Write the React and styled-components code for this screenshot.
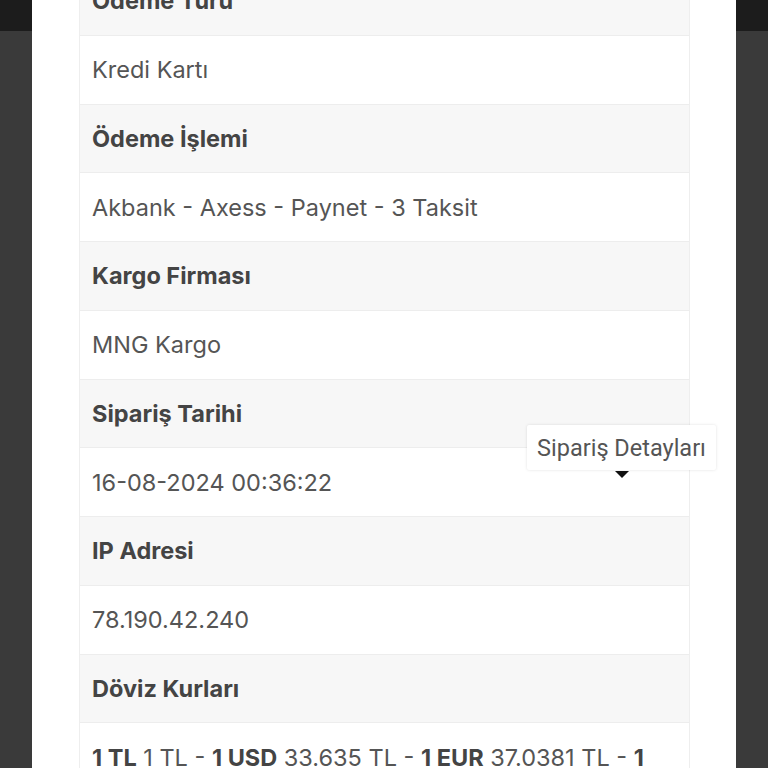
import React from "react";
import styled, { createGlobalStyle } from "styled-components";

const Global = createGlobalStyle`
  html, body { margin: 0; padding: 0; }
  body {
    background: #3a3a3a;
    font-family: Inter, Roboto, sans-serif;
    overflow: hidden;
  }
`;

const Page = styled.div`
  position: relative;
  width: 768px;
  height: 768px;
  overflow: hidden;
  background: #3a3a3a;
`;

const TopBar = styled.div`
  height: 31px;
  background: #1c1c1c;
`;

const Modal = styled.div`
  position: absolute;
  top: -34px;
  left: 32px;
  width: 704px;
  background: #ffffff;
  padding: 0 47px;
  box-sizing: border-box;
`;

const Table = styled.div`
  display: flex;
  flex-direction: column;
  border-left: 1px solid #eeeeee;
  border-right: 1px solid #eeeeee;
  width: 611px;
  box-sizing: border-box;
`;

const Cell = styled.div`
  box-sizing: border-box;
  height: 68.75px;
  padding: 0 12px;
  display: flex;
  align-items: center;
  border-top: 1px solid #ededed;
  background: ${(p) => (p.$head ? "#f7f7f7" : "#ffffff")};
  color: ${(p) => (p.$head ? "#444444" : "#555555")};
  font-family: Inter, Roboto, sans-serif;
  font-size: 23.5px;
  font-weight: ${(p) => (p.$head ? 700 : 400)};
  white-space: nowrap;
  overflow: hidden;
`;

const B = styled.b`
  font-weight: 700;
  color: #444;
`;

const Tooltip = styled.div`
  position: absolute;
  left: 527px;
  top: 425px;
  width: 189px;
  height: 45px;
  box-sizing: border-box;
  background: #ffffff;
  border-radius: 2px;
  box-shadow: 0 0 3px rgba(0, 0, 0, 0.12);
  display: flex;
  align-items: center;
  justify-content: center;
  font-family: Roboto, sans-serif;
  font-size: 23.5px;
  color: #555555;
  white-space: nowrap;
  &::after {
    content: "";
    position: absolute;
    left: 88px;
    top: 46px;
    border-left: 7px solid transparent;
    border-right: 7px solid transparent;
    border-top: 7px solid #111;
  }
`;

const rows = [
  ["Ödeme Türü", "Kredi Kartı"],
  ["Ödeme İşlemi", "Akbank - Axess - Paynet - 3 Taksit"],
  ["Kargo Firması", "MNG Kargo"],
  ["Sipariş Tarihi", "16-08-2024 00:36:22"],
  ["IP Adresi", "78.190.42.240"],
];

export default function App() {
  return (
    <Page>
      <Global />
      <TopBar />
      <Modal>
        <Table>
          {rows.map(([h, v]) => (
            <React.Fragment key={h}>
              <Cell $head>{h}</Cell>
              <Cell>{v}</Cell>
            </React.Fragment>
          ))}
          <Cell $head>Döviz Kurları</Cell>
          <Cell>
            <span>
              <B>1 TL</B> 1 TL - <B>1 USD</B> 33.635 TL - <B>1 EUR</B> 37.0381 TL - <B>1</B>
            </span>
          </Cell>
        </Table>
      </Modal>
      <Tooltip>Sipariş Detayları</Tooltip>
    </Page>
  );
}
